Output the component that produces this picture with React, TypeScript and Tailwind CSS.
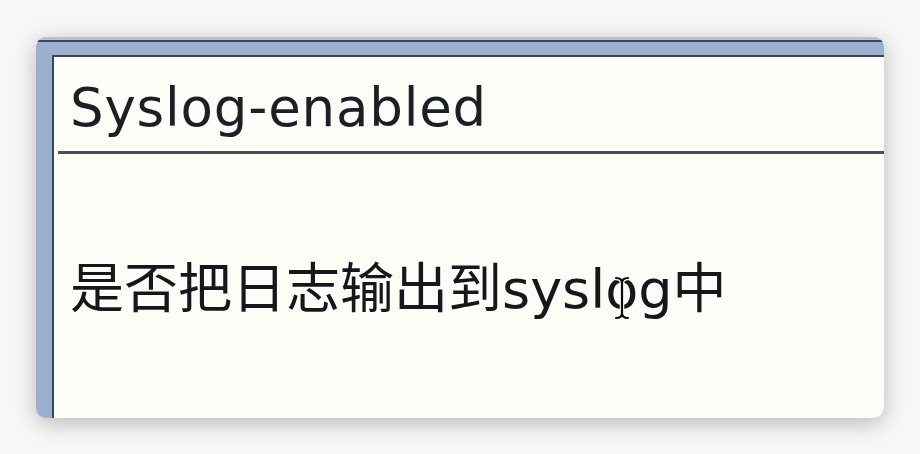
import React from "react";

const latin = { fontFamily: '"DejaVu Sans", "Noto Sans CJK SC", sans-serif' };

function IBeam() {
  return (
    <svg
      className="absolute left-1/2 top-[13px] -translate-x-1/2"
      width="16"
      height="44"
      viewBox="0 0 16 44"
    >
      <path
        d="M2 2 Q8 2 8 7 Q8 2 14 2 M8 7 V37 M2 42 Q8 42 8 37 Q8 42 14 42"
        fill="none"
        stroke="#ffffff"
        strokeWidth="4.5"
        strokeLinecap="round"
      />
      <path
        d="M2 2 Q8 2 8 7 Q8 2 14 2 M8 7 V37 M2 42 Q8 42 8 37 Q8 42 14 42"
        fill="none"
        stroke="#0d0d0d"
        strokeWidth="2.2"
        strokeLinecap="round"
      />
    </svg>
  );
}

export default function App() {
  return (
    <div className="w-[920px] h-[454px] bg-[#f7f7f7] pt-[37px] pl-[36px]">
      <div className="w-[848px] h-[381px] rounded-[10px] overflow-hidden bg-[#9bb0cf] shadow-[0_5px_22px_rgba(0,0,0,0.26)] flex flex-col">
        <div className="h-[3px] bg-[#b3c2d8]" />
        <div className="h-[2px] bg-[#3d4758]" />
        <div className="h-[13px]" />
        <div className="flex flex-1">
          <div className="w-[16px]" />
          <div className="flex-1 border-l-2 border-t-2 border-[#3d4758] bg-[#fcfdf7] flex flex-col">
            <div className="ml-[4px] h-[97px] border-b-[3px] border-[#4a5058] pt-[24px] pl-[12px]">
              <div
                className="text-[53px] leading-none text-[#1c1f26] tracking-[0.8px]"
                style={latin}
              >
                Syslog-enabled
              </div>
            </div>
            <div className="pt-[109px] pl-[16px]">
              <div className="text-[54px] leading-none text-[#15171c]" style={latin}>
                是否把日志输出到sysl
                <span className="relative inline-block">
                  o
                  <IBeam />
                </span>
                g中
              </div>
            </div>
          </div>
        </div>
      </div>
    </div>
  );
}
